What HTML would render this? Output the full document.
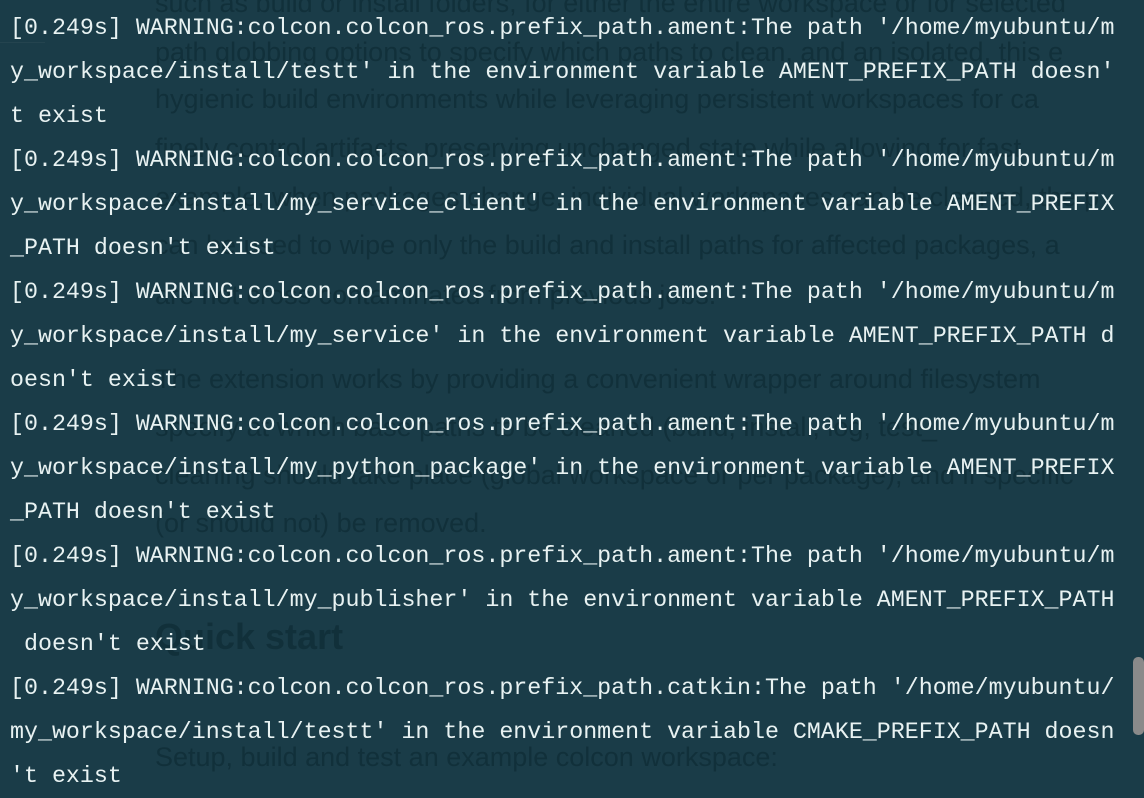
<!DOCTYPE html>
<html><head><meta charset="utf-8"><style>
html,body{margin:0;padding:0;width:1144px;height:788px;overflow:hidden;background:#1a3c48;}
.bg{position:absolute;left:155px;top:0;font-family:"Liberation Sans",sans-serif;font-size:27px;color:#0f2c36;opacity:.7;white-space:nowrap;}
.bg div{position:absolute;left:0;}
.t{position:absolute;left:10px;top:6px;font-family:"Liberation Mono",monospace;font-size:23.3px;line-height:44px;color:#e8f2f2;white-space:pre;}
.sb{position:absolute;left:1133px;top:657px;width:11px;height:78px;background:#8a8a8a;border-radius:5px;}
.ln{position:absolute;left:0;top:42px;width:45px;height:1px;background:#24444f;}
</style></head><body>
<div class="bg">
<div style="top:-12px">such as build or install folders, for either the entire workspace or for selected</div>
<div style="top:37px">path globbing options to specify which paths to clean, and an isolated, this e</div>
<div style="top:84px">hygienic build environments while leveraging persistent workspaces for ca</div>
<div style="top:133px">finely control artifacts, preserving unchanged state while allowing for fast</div>
<div style="top:182px">example, when packages change, individual workspaces can be cleaned, the p</div>
<div style="top:230px">can be used to wipe only the build and install paths for affected packages, a</div>
<div style="top:280px">are not cross contaminated from previous jobs.</div>
<div style="top:364px">The extension works by providing a convenient wrapper around filesystem</div>
<div style="top:412px">specify at which base paths to be cleaned (build, install, log, test_</div>
<div style="top:460px">cleaning should take place (global workspace or per package), and if specific</div>
<div style="top:508px">(or should not) be removed.</div>
<div style="top:616px;font-size:36px;font-weight:bold">Quick start</div>
<div style="top:742px">Setup, build and test an example colcon workspace:</div>
</div>
<div class="ln"></div>
<div class="t">[0.249s] WARNING:colcon.colcon_ros.prefix_path.ament:The path '/home/myubuntu/m
y_workspace/install/testt' in the environment variable AMENT_PREFIX_PATH doesn'
t exist
[0.249s] WARNING:colcon.colcon_ros.prefix_path.ament:The path '/home/myubuntu/m
y_workspace/install/my_service_client' in the environment variable AMENT_PREFIX
_PATH doesn't exist
[0.249s] WARNING:colcon.colcon_ros.prefix_path.ament:The path '/home/myubuntu/m
y_workspace/install/my_service' in the environment variable AMENT_PREFIX_PATH d
oesn't exist
[0.249s] WARNING:colcon.colcon_ros.prefix_path.ament:The path '/home/myubuntu/m
y_workspace/install/my_python_package' in the environment variable AMENT_PREFIX
_PATH doesn't exist
[0.249s] WARNING:colcon.colcon_ros.prefix_path.ament:The path '/home/myubuntu/m
y_workspace/install/my_publisher' in the environment variable AMENT_PREFIX_PATH
 doesn't exist
[0.249s] WARNING:colcon.colcon_ros.prefix_path.catkin:The path '/home/myubuntu/
my_workspace/install/testt' in the environment variable CMAKE_PREFIX_PATH doesn
't exist</div>
<div class="sb"></div>
</body></html>
